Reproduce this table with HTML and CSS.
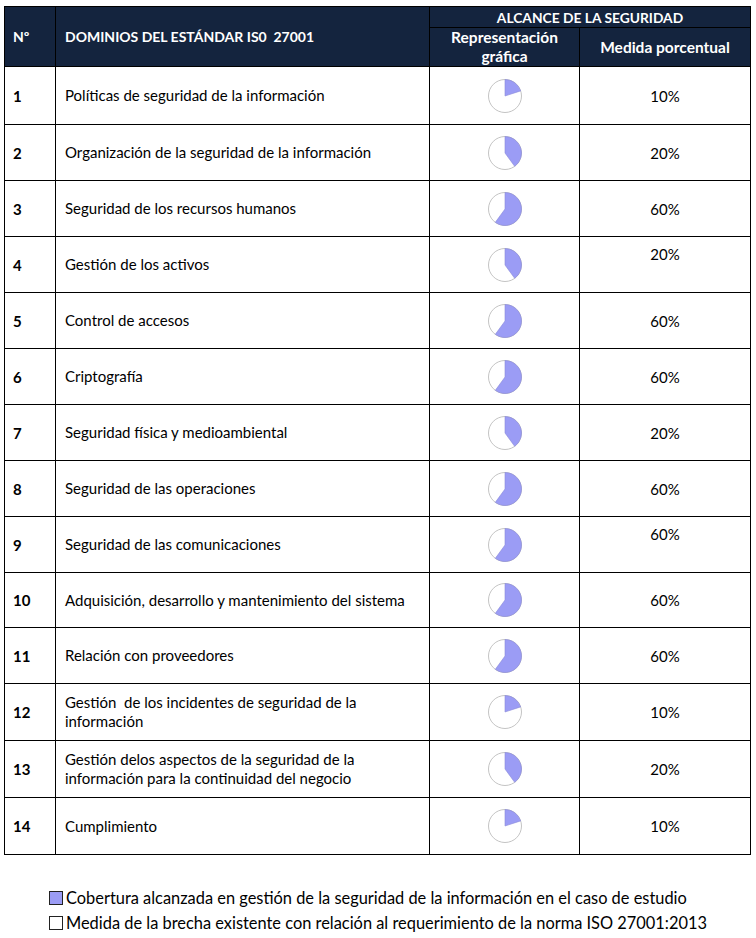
FILE: index.html
```html
<!DOCTYPE html>
<html lang="es">
<head>
<meta charset="utf-8">
<title>Dominios ISO 27001</title>
<link rel="stylesheet" href="styles.css">
</head>
<body>
<main class="page">
<table class="grid">
  <colgroup>
    <col class="c-num"><col class="c-dom"><col class="c-pie"><col class="c-pct">
  </colgroup>
  <thead>
    <tr class="h1">
      <th rowspan="2" class="th-num">Nº</th>
      <th rowspan="2" class="th-dom">DOMINIOS DEL ESTÁNDAR IS0&nbsp; 27001</th>
      <th colspan="2" class="th-group">ALCANCE DE LA SEGURIDAD</th>
    </tr>
    <tr class="h2">
      <th class="th-sub">Representación<br>gráfica</th>
      <th class="th-sub">Medida porcentual</th>
    </tr>
  </thead>
  <tbody>
    <tr class="r58"><td class="num">1</td><td class="dom">Políticas de seguridad de la información</td><td class="pie"><svg viewBox="0 0 36 36" class="pie-svg"><circle cx="18" cy="18" r="16.5" class="pie-bg"/><path d="M18 18 L18 1.5 A16.5 16.5 0 0 1 33.69 12.9 Z" class="pie-fill"/></svg></td><td class="pct">10%</td></tr>
    <tr class="r56"><td class="num">2</td><td class="dom">Organización de la seguridad de la información</td><td class="pie"><svg viewBox="0 0 36 36" class="pie-svg"><circle cx="18" cy="18" r="16.5" class="pie-bg"/><path d="M18 18 L18 1.5 A16.5 16.5 0 0 1 27.7 31.35 Z" class="pie-fill"/></svg></td><td class="pct">20%</td></tr>
    <tr class="r56"><td class="num">3</td><td class="dom">Seguridad de los recursos humanos</td><td class="pie"><svg viewBox="0 0 36 36" class="pie-svg"><circle cx="18" cy="18" r="16.5" class="pie-bg"/><path d="M18 18 L18 1.5 A16.5 16.5 0 1 1 8.3 31.35 Z" class="pie-fill"/></svg></td><td class="pct">60%</td></tr>
    <tr class="r56"><td class="num">4</td><td class="dom">Gestión de los activos</td><td class="pie"><svg viewBox="0 0 36 36" class="pie-svg"><circle cx="18" cy="18" r="16.5" class="pie-bg"/><path d="M18 18 L18 1.5 A16.5 16.5 0 0 1 27.7 31.35 Z" class="pie-fill"/></svg></td><td class="pct top">20%</td></tr>
    <tr class="r56"><td class="num">5</td><td class="dom">Control de accesos</td><td class="pie"><svg viewBox="0 0 36 36" class="pie-svg"><circle cx="18" cy="18" r="16.5" class="pie-bg"/><path d="M18 18 L18 1.5 A16.5 16.5 0 1 1 8.3 31.35 Z" class="pie-fill"/></svg></td><td class="pct">60%</td></tr>
    <tr class="r56"><td class="num">6</td><td class="dom">Criptografía</td><td class="pie"><svg viewBox="0 0 36 36" class="pie-svg"><circle cx="18" cy="18" r="16.5" class="pie-bg"/><path d="M18 18 L18 1.5 A16.5 16.5 0 1 1 8.3 31.35 Z" class="pie-fill"/></svg></td><td class="pct">60%</td></tr>
    <tr class="r56"><td class="num">7</td><td class="dom">Seguridad física y medioambiental</td><td class="pie"><svg viewBox="0 0 36 36" class="pie-svg"><circle cx="18" cy="18" r="16.5" class="pie-bg"/><path d="M18 18 L18 1.5 A16.5 16.5 0 0 1 27.7 31.35 Z" class="pie-fill"/></svg></td><td class="pct">20%</td></tr>
    <tr class="r56"><td class="num">8</td><td class="dom">Seguridad de las operaciones</td><td class="pie"><svg viewBox="0 0 36 36" class="pie-svg"><circle cx="18" cy="18" r="16.5" class="pie-bg"/><path d="M18 18 L18 1.5 A16.5 16.5 0 1 1 8.3 31.35 Z" class="pie-fill"/></svg></td><td class="pct">60%</td></tr>
    <tr class="r56"><td class="num">9</td><td class="dom">Seguridad de las comunicaciones</td><td class="pie"><svg viewBox="0 0 36 36" class="pie-svg"><circle cx="18" cy="18" r="16.5" class="pie-bg"/><path d="M18 18 L18 1.5 A16.5 16.5 0 1 1 8.3 31.35 Z" class="pie-fill"/></svg></td><td class="pct top">60%</td></tr>
    <tr class="r55"><td class="num">10</td><td class="dom">Adquisición, desarrollo y mantenimiento del sistema</td><td class="pie"><svg viewBox="0 0 36 36" class="pie-svg"><circle cx="18" cy="18" r="16.5" class="pie-bg"/><path d="M18 18 L18 1.5 A16.5 16.5 0 1 1 8.3 31.35 Z" class="pie-fill"/></svg></td><td class="pct">60%</td></tr>
    <tr class="r56"><td class="num">11</td><td class="dom">Relación con proveedores</td><td class="pie"><svg viewBox="0 0 36 36" class="pie-svg"><circle cx="18" cy="18" r="16.5" class="pie-bg"/><path d="M18 18 L18 1.5 A16.5 16.5 0 1 1 8.3 31.35 Z" class="pie-fill"/></svg></td><td class="pct">60%</td></tr>
    <tr class="r57"><td class="num">12</td><td class="dom">Gestión&nbsp; de los incidentes de seguridad de la<br>información</td><td class="pie"><svg viewBox="0 0 36 36" class="pie-svg"><circle cx="18" cy="18" r="16.5" class="pie-bg"/><path d="M18 18 L18 1.5 A16.5 16.5 0 0 1 33.69 12.9 Z" class="pie-fill"/></svg></td><td class="pct">10%</td></tr>
    <tr class="r57"><td class="num">13</td><td class="dom">Gestión delos aspectos de la seguridad de la<br>información para la continuidad del negocio</td><td class="pie"><svg viewBox="0 0 36 36" class="pie-svg"><circle cx="18" cy="18" r="16.5" class="pie-bg"/><path d="M18 18 L18 1.5 A16.5 16.5 0 0 1 27.7 31.35 Z" class="pie-fill"/></svg></td><td class="pct">20%</td></tr>
    <tr class="r57"><td class="num">14</td><td class="dom">Cumplimiento</td><td class="pie"><svg viewBox="0 0 36 36" class="pie-svg"><circle cx="18" cy="18" r="16.5" class="pie-bg"/><path d="M18 18 L18 1.5 A16.5 16.5 0 0 1 33.69 12.9 Z" class="pie-fill"/></svg></td><td class="pct">10%</td></tr>
  </tbody>
</table>

<ul class="legend">
  <li class="legend-item"><span class="swatch swatch-fill"></span>Cobertura alcanzada en gestión de la seguridad de la información en el caso de estudio</li>
  <li class="legend-item"><span class="swatch swatch-empty"></span>Medida de la brecha existente con relación al requerimiento de la norma ISO 27001:2013</li>
</ul>
</main>
</body>
</html>
```

FILE: styles.css
```css
html, body {
  margin: 0;
  padding: 0;
  background: #ffffff;
}

body {
  font-family: Lato, "Liberation Sans", sans-serif;
  color: #000;
}

.page {
  padding: 6px 0 0 4px;
}

.grid {
  border-collapse: collapse;
  table-layout: fixed;
  width: 746px;
  font-size: 15px;
}

.c-num { width: 51px; }
.c-dom { width: 374px; }
.c-pie { width: 150px; }
.c-pct { width: 171px; }

.grid th,
.grid td {
  border: 1px solid #000;
  padding: 0;
}

.grid thead th {
  background: #14243e;
  color: #fff;
  font-weight: 700;
  font-size: 14px;
}

.h1 { height: 21px; }
.h2 { height: 39px; }

.grid .th-num {
  text-align: left;
  padding-left: 8px;
}

.grid .th-dom {
  text-align: left;
  padding-left: 9px;
}

.grid .th-group {
  text-align: center;
  line-height: 16px;
  padding-top: 1px;
  font-size: 13.8px;
}

.grid .th-sub {
  text-align: center;
  line-height: 19px;
  font-size: 15.5px;
}

.r58 { height: 58px; }
.r57 { height: 57px; }
.r56 { height: 56px; }
.r55 { height: 55px; }

.grid .num {
  font-weight: 700;
  padding-left: 8px;
}

.grid .dom {
  padding-left: 9px;
  line-height: 19px;
}

.pie {
  text-align: center;
}

.pie-svg {
  display: block;
  width: 36px;
  height: 36px;
  margin: 0 auto;
}

.pie-bg {
  fill: #ffffff;
  stroke: #c4c4c4;
  stroke-width: 1;
}

.pie-fill {
  fill: #9b9cf5;
  stroke: #8c8cd8;
  stroke-width: 0.6;
}

.pct {
  text-align: center;
}

.grid .pct.top {
  vertical-align: top;
  padding-top: 8px;
}

.legend {
  list-style: none;
  margin: 30px 0 0 45px;
  padding: 0;
  font-size: 16.4px;
  line-height: 25px;
}

.legend-item {
  display: flex;
  align-items: center;
}

.swatch {
  display: inline-block;
  width: 14px;
  height: 14px;
  border: 1px solid #222;
  margin-right: 3px;
  box-sizing: border-box;
}

.swatch-fill { background: #9b9cf5; }
.swatch-empty { background: #fff; }
```
